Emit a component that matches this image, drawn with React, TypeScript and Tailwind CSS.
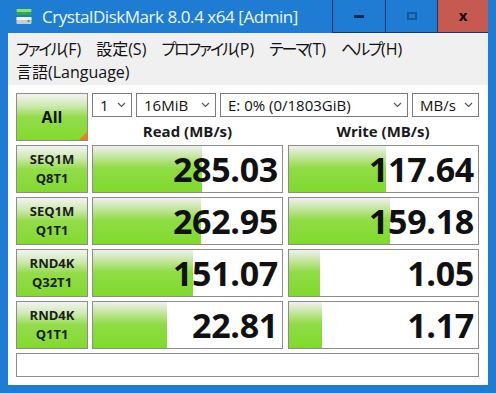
import React from "react";

const rows = [
  { a: "SEQ1M", b: "Q8T1", r: "285.03", rw: 109, w: "117.64", ww: 97 },
  { a: "SEQ1M", b: "Q1T1", r: "262.95", rw: 108, w: "159.18", ww: 101 },
  { a: "RND4K", b: "Q32T1", r: "151.07", rw: 100, w: "1.05", ww: 31 },
  { a: "RND4K", b: "Q1T1", r: "22.81", rw: 74, w: "1.17", ww: 33 },
];

function Chevron() {
  return (
    <svg width="9" height="6" viewBox="0 0 9 6" className="shrink-0">
      <polyline points="1,1 4.5,4.5 8,1" fill="none" stroke="#555" strokeWidth="1.2" />
    </svg>
  );
}

function Select({ w, text }: { w: string; text: string }) {
  return (
    <div className={`${w} h-[24px] border border-[#7a7a7a] bg-white flex items-center justify-between pl-[7px] pr-[5px] text-[15px] text-[#111]`}>
      <span className="leading-none">{text}</span>
      <Chevron />
    </div>
  );
}

function Cell({ value, bar }: { value: string; bar: number }) {
  return (
    <div className="relative h-[48px] border border-[#8c8c8c] bg-white flex items-center justify-end pr-[4px]">
      <div
        className="absolute left-0 top-0 bottom-0 bg-[linear-gradient(to_bottom,#f0f1ef_0%,#c6e6a2_22%,#8fdc45_48%,#80da2c_100%)]"
        style={{ width: bar }}
      />
      <span className="relative text-[34px] font-bold leading-none text-[#111] tracking-[-0.3px]">{value}</span>
    </div>
  );
}

function Label({ a, b }: { a: string; b: string }) {
  return (
    <div className="h-[48px] border border-[#8c8c8c] bg-[linear-gradient(to_bottom,#f2f4f0_0%,#cfe9b3_25%,#93dc4a_50%,#82da2e_100%)] flex flex-col items-center justify-center text-[13px] font-bold leading-[19px] text-[#1c1c1c]">
      <span>{a}</span>
      <span>{b}</span>
    </div>
  );
}

function MenuItem({ jp, key2, tight = true }: { jp: string; key2: string; tight?: boolean }) {
  return (
    <span className="whitespace-nowrap">
      <span className={tight ? "tracking-[-2px]" : ""}>{jp}</span>
      <span>{key2}</span>
    </span>
  );
}

export default function App() {
  return (
    <div className="w-[496px] h-[393px] flex flex-col bg-[#1e7dd2] font-['Open_Sans','Noto_Sans_CJK_JP',sans-serif] overflow-hidden">
      {/* Title bar */}
      <div className="h-[33px] flex items-stretch">
        <div className="flex-1 flex items-center pl-[16px] gap-[10px]">
          <svg width="16" height="16" viewBox="0 0 16 16">
            <rect x="0.5" y="0" width="15" height="3" rx="1" fill="#8fe06a" />
            <rect x="0.5" y="3" width="15" height="3" fill="#2fa84a" />
            <rect x="0.5" y="8" width="15" height="7" rx="1" fill="#c9ced3" />
            <rect x="0.5" y="8" width="15" height="3" rx="1" fill="#eef0f2" />
            <circle cx="12.5" cy="12" r="1.2" fill="#3cb043" />
          </svg>
          <span className="text-[17px] text-[#eef6ff] leading-none tracking-[-0.45px]">CrystalDiskMark 8.0.4 x64 [Admin]</span>
        </div>
        <div className="flex mr-[8px]">
          <div className="w-[53px] border-l border-b border-[#173a63] flex items-center justify-center">
            <div className="w-[10px] h-[3px] bg-[#0d2b52]" />
          </div>
          <div className="w-[52px] border-l border-b border-[#173a63] flex items-center justify-center">
            <div className="w-[10px] h-[8px] border-2 border-[#1a5597]" />
          </div>
          <div className="w-[51px] border-l border-b border-[#173a63] bg-[#c75a50] flex items-center justify-center">
            <span className="text-[15px] font-bold leading-none text-[#120606] -mt-[2px]">x</span>
          </div>
        </div>
      </div>

      {/* Window body */}
      <div className="flex-1 mx-[8px] mb-[8px] flex flex-col bg-white">
        {/* Menu */}
        <div className="h-[52px] bg-[#f0f0f0] pt-[4px] pl-[8px] text-[16px] text-[#111] [font-feature-settings:'palt']">
          <div className="h-[23px] flex items-center gap-[15px]">
            <MenuItem jp="ファイル" key2="(F)" />
            <MenuItem jp="設定" key2="(S)" tight={false} />
            <MenuItem jp="プロファイル" key2="(P)" />
            <MenuItem jp="テーマ" key2="(T)" />
            <MenuItem jp="ヘルプ" key2="(H)" />
          </div>
          <div className="h-[23px] flex items-center">
            <span>言語(Language)</span>
          </div>
        </div>

        {/* Content */}
        <div className="flex-1 pt-[8px] pl-[8px] pr-[9px] pb-[8px] flex flex-col gap-[4px]">
          <div className="flex gap-[4px]">
            <div className="relative w-[72px] h-[48px] border border-[#8c8c8c] bg-[linear-gradient(to_bottom,#f2f4f0_0%,#cfe9b3_25%,#93dc4a_50%,#82da2e_100%)] flex items-center justify-center">
              <span className="text-[16px] font-bold text-[#111] leading-none">All</span>
              <div className="absolute right-0 bottom-0 w-0 h-0 border-l-[8px] border-l-transparent border-b-[8px] border-b-[#f07f16]" />
            </div>
            <div className="flex-1 flex flex-col">
              <div className="flex gap-[4px]">
                <Select w="w-[40px]" text="1" />
                <Select w="w-[80px]" text="16MiB" />
                <Select w="w-[188px]" text="E: 0% (0/1803GiB)" />
                <Select w="w-[67px]" text="MB/s" />
              </div>
              <div className="h-[24px] flex pt-[4px] text-[15px] font-bold text-[#1a1a1a]">
                <div className="w-[191px] flex items-center justify-center">Read (MB/s)</div>
                <div className="w-[4px]" />
                <div className="flex-1 flex items-center justify-center">Write (MB/s)</div>
              </div>
            </div>
          </div>

          {rows.map((r) => (
            <div key={r.a + r.b} className="flex gap-[4px]">
              <div className="w-[72px]">
                <Label a={r.a} b={r.b} />
              </div>
              <div className="w-[191px]">
                <Cell value={r.r} bar={r.rw} />
              </div>
              <div className="flex-1 ml-[1px]">
                <Cell value={r.w} bar={r.ww} />
              </div>
            </div>
          ))}

          <div className="h-[24px] border border-[#8c8c8c] bg-white" />
        </div>
      </div>
    </div>
  );
}
